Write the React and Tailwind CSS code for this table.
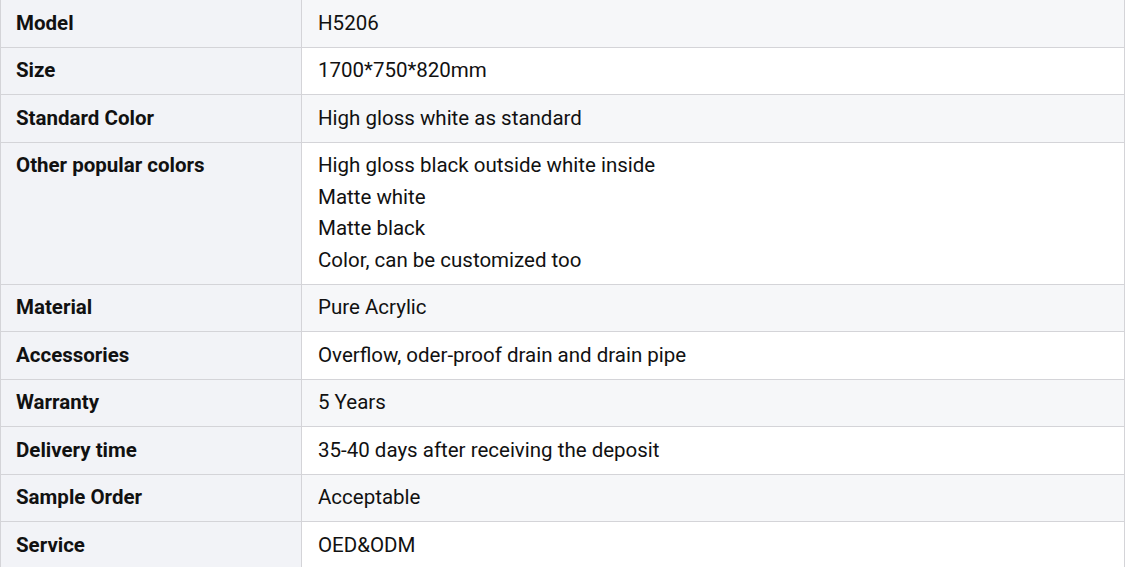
const rows = [
  ["Model", ["H5206"]],
  ["Size", ["1700*750*820mm"]],
  ["Standard Color", ["High gloss white as standard"]],
  [
    "Other popular colors",
    [
      "High gloss black outside white inside",
      "Matte white",
      "Matte black",
      "Color, can be customized too",
    ],
  ],
  ["Material", ["Pure Acrylic"]],
  ["Accessories", ["Overflow, oder-proof drain and drain pipe"]],
  ["Warranty", ["5 Years"]],
  ["Delivery time", ["35-40 days after receiving the deposit"]],
  ["Sample Order", ["Acceptable"]],
  ["Service", ["OED&ODM"]],
];

export default function App() {
  return (
    <div className="w-[1125px] h-[567px] overflow-hidden bg-white font-['Roboto',sans-serif] text-[20.5px] leading-[31.5px] text-[#111]">
      <table className="w-full border-collapse">
        <tbody>
          {rows.map(([label, lines], i) => (
            <tr key={label}>
              <td className="w-[301px] align-top border border-t-0 border-[#d4d4d8] bg-[#f2f3f7] pl-[15px] pr-4 py-[7.5px] font-bold">
                {label}
              </td>
              <td
                className={`align-top border border-t-0 border-[#d4d4d8] px-4 py-[7.5px] ${i % 2 === 0 ? "bg-[#f6f7f9]" : "bg-white"}`}
              >
                {lines.map((l) => (
                  <div key={l}>{l}</div>
                ))}
              </td>
            </tr>
          ))}
        </tbody>
      </table>
    </div>
  );
}
